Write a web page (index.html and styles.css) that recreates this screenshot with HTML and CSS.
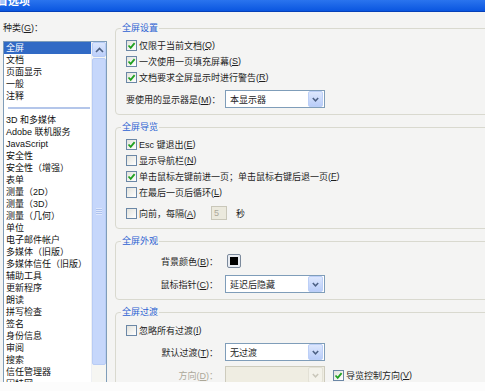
FILE: index.html
```html
<!DOCTYPE html>
<html lang="zh-CN">
<head>
    <meta charset="UTF-8">
    <title>首选项</title>
    <link rel="stylesheet" href="styles.css">
</head>
<body>
<div class="dialog">
    <div class="titlebar"><span class="title-text">首选项</span></div>
    <div class="content">
        <div class="side">
            <div class="side-label">种类(<u>G</u>)：</div>
            <div class="listbox">
                <ul class="items">
                    <li class="selected">全屏</li>
                    <li>文档</li>
                    <li>页面显示</li>
                    <li>一般</li>
                    <li>注释</li>
                    <li class="sep"><span></span></li>
                    <li>3D 和多媒体</li>
                    <li>Adobe 联机服务</li>
                    <li>JavaScript</li>
                    <li>安全性</li>
                    <li>安全性（增强）</li>
                    <li>表单</li>
                    <li>测量（2D）</li>
                    <li>测量（3D）</li>
                    <li>测量（几何）</li>
                    <li>单位</li>
                    <li>电子邮件帐户</li>
                    <li>多媒体（旧版）</li>
                    <li>多媒体信任（旧版）</li>
                    <li>辅助工具</li>
                    <li>更新程序</li>
                    <li>朗读</li>
                    <li>拼写检查</li>
                    <li>签名</li>
                    <li>身份信息</li>
                    <li>审阅</li>
                    <li>搜索</li>
                    <li>信任管理器</li>
                    <li>因特网</li>
                </ul>
                <div class="scrollbar">
                    <div class="scroll-btn">
                        <svg width="9" height="6" viewBox="0 0 9 6"><polyline points="1,5 4.5,1.5 8,5" fill="none" stroke="#4d6185" stroke-width="1.6"/></svg>
                    </div>
                    <div class="scroll-thumb"><span class="grip"></span></div>
                </div>
            </div>
        </div>

        <div class="main">
            <fieldset class="group">
                <legend>全屏设置</legend>
                <div class="group-body">
                    <div class="check-row"><span class="check on"></span>仅限于当前文档(<u>Q</u>)</div>
                    <div class="check-row"><span class="check on"></span>一次使用一页填充屏幕(<u>S</u>)</div>
                    <div class="check-row"><span class="check on"></span>文档要求全屏显示时进行警告(<u>R</u>)</div>
                    <div class="field-row gap5">
                        <span class="field-label">要使用的显示器是(<u>M</u>)：</span>
                        <div class="select"><span class="select-text">本显示器</span><span class="select-btn"></span></div>
                    </div>
                </div>
            </fieldset>

            <fieldset class="group">
                <legend>全屏导览</legend>
                <div class="group-body">
                    <div class="check-row"><span class="check on"></span>Esc 键退出(<u>E</u>)</div>
                    <div class="check-row"><span class="check"></span>显示导航栏(<u>N</u>)</div>
                    <div class="check-row"><span class="check on"></span>单击鼠标左键前进一页；单击鼠标右键后退一页(<u>F</u>)</div>
                    <div class="check-row"><span class="check"></span>在最后一页后循环(<u>L</u>)</div>
                    <div class="check-row tall gap4">
                        <span class="check"></span><span class="every">向前，每隔(<u>A</u>)</span>
                        <span class="num-input">5</span><span class="unit">秒</span>
                    </div>
                </div>
            </fieldset>

            <fieldset class="group">
                <legend>全屏外观</legend>
                <div class="group-body pad-top">
                    <div class="field-row short">
                        <span class="field-label">背景颜色(<u>B</u>)：</span>
                        <span class="swatch"><span></span></span>
                    </div>
                    <div class="field-row gap6">
                        <span class="field-label">鼠标指针(<u>C</u>)：</span>
                        <div class="select"><span class="select-text">延迟后隐藏</span><span class="select-btn"></span></div>
                    </div>
                </div>
            </fieldset>

            <fieldset class="group">
                <legend>全屏过渡</legend>
                <div class="group-body pad-small">
                    <div class="check-row"><span class="check"></span>忽略所有过渡(<u>I</u>)</div>
                    <div class="field-row gap5">
                        <span class="field-label">默认过渡(<u>T</u>)：</span>
                        <div class="select"><span class="select-text">无过渡</span><span class="select-btn"></span></div>
                    </div>
                    <div class="field-row gap5">
                        <span class="field-label disabled">方向(<u>D</u>)：</span>
                        <div class="select off"><span class="select-text"></span><span class="select-btn"></span></div>
                        <span class="check on nav-check"></span>导览控制方向(<u>V</u>)
                    </div>
                </div>
            </fieldset>
        </div>
    </div>
</div>
</body>
</html>
```

FILE: styles.css
```css
body {
    margin: 0;
    padding: 0;
    background-color: #fcfcfc;
    font-family: "Liberation Sans", "Noto Sans CJK SC", sans-serif;
    font-size: 9px;
    color: #1e1e1e;
}
u {
    text-decoration: underline;
}
.dialog {
    width: 485px;
    height: 382px;
    overflow: hidden;
    background-color: #f4f4f3;
}
.titlebar {
    height: 11px;
    overflow: hidden;
    background: linear-gradient(#2a74ee, #0a56e0);
    border-bottom: 1px solid #0640b8;
}
.title-text {
    display: block;
    margin-top: -7px;
    margin-left: -3px;
    line-height: 16px;
    font-size: 11px;
    font-weight: bold;
    color: #fff;
}
.content {
    display: flex;
}

/* left category list */
.side {
    width: 104px;
    flex-shrink: 0;
    padding: 10px 0 0 3px;
}
.side-label {
    line-height: 12px;
    height: 12px;
}
.listbox {
    margin-top: 7px;
    height: 350px;
    display: flex;
    border: 1px solid #7f9db9;
    background-color: #fff;
}
.items {
    list-style: none;
    margin: 0;
    padding: 0;
    flex: 1;
}
.items li {
    height: 12px;
    line-height: 12px;
    padding-left: 2px;
    white-space: nowrap;
    color: #111;
}
.items li.selected {
    background-color: #316ac5;
    color: #fff;
}
.items li.sep {
    display: flex;
    align-items: center;
    padding: 0 1px 0 4px;
}
.items li.sep span {
    flex: 1;
    height: 2px;
    background-color: #b4c6ea;
}
.scrollbar {
    width: 14px;
    display: flex;
    flex-direction: column;
    background-color: #f6f6f2;
    border-left: 1px solid #eef0f4;
}
.scroll-btn {
    height: 13px;
    display: flex;
    align-items: center;
    justify-content: center;
    background: linear-gradient(#dbe6fd, #bccffa);
    border: 1px solid #b6cbf6;
    border-radius: 2px;
}
.scroll-thumb {
    height: 305px;
    margin-top: 1px;
    display: flex;
    align-items: center;
    justify-content: center;
    background-color: #c6d7fb;
    border: 1px solid #b8ccf5;
    border-radius: 2px;
}
.grip {
    width: 6px;
    height: 7px;
    background: repeating-linear-gradient(#eef3fe 0 1px, #9db4e6 1px 2px);
    opacity: 0.6;
}

/* right settings */
.main {
    width: 390px;
    flex-shrink: 0;
    margin-left: 8px;
    padding-top: 10px;
}
.group {
    margin: 0 0 6px;
    padding: 0 0 6px 5px;
    border: 1px solid #d9d9cf;
    border-radius: 4px;
    min-width: 0;
}
.group legend {
    padding: 0 1px;
    line-height: 12px;
    font-size: 9px;
    color: #2c62d2;
}
.group-body {
    padding: 3px 0 0 5px;
}
.group-body.pad-top {
    padding-top: 6px;
}
.group-body.pad-small {
    padding-top: 4px;
}
.check-row {
    display: flex;
    align-items: center;
    height: 16px;
    white-space: nowrap;
}
.check-row.tall {
    height: 18px;
}
.check {
    width: 11px;
    height: 11px;
    box-sizing: border-box;
    margin-right: 2px;
    border: 1px solid #6b87a6;
    background: linear-gradient(135deg, #e2e2dc, #fff);
    flex-shrink: 0;
}
.check.on {
    background: url("data:image/svg+xml;utf8,<svg xmlns='http://www.w3.org/2000/svg' width='9' height='9'><polyline points='1.5,4.5 3.7,6.8 7.6,2.2' fill='none' stroke='%2321a121' stroke-width='1.8'/></svg>") center no-repeat, linear-gradient(135deg, #e2e2dc, #fff);
}
.gap4 {
    margin-top: 4px;
}
.gap5 {
    margin-top: 5px;
}
.gap6 {
    margin-top: 6px;
}
.every {
    width: 72px;
}
.num-input {
    width: 16px;
    height: 14px;
    box-sizing: border-box;
    padding-left: 2px;
    line-height: 12px;
    border: 1px solid #c9c7b9;
    background-color: #ebe9dd;
    color: #aca899;
}
.unit {
    margin-left: 9px;
}
.field-row {
    display: flex;
    align-items: center;
    height: 18px;
    white-space: nowrap;
}
.field-row.short {
    height: 16px;
}
.field-label {
    width: 92px;
    margin-right: 7px;
    text-align: right;
}
.field-label.disabled {
    color: #aca899;
}
.select {
    width: 100px;
    height: 18px;
    box-sizing: border-box;
    display: flex;
    align-items: center;
    border: 1px solid #7f9db9;
    background-color: #fff;
}
.select-text {
    flex: 1;
    padding-left: 4px;
}
.select-btn {
    width: 13px;
    height: 14px;
    margin-right: 1px;
    border: 1px solid #bccff7;
    border-radius: 2px;
    background: url("data:image/svg+xml;utf8,<svg xmlns='http://www.w3.org/2000/svg' width='7' height='5'><polyline points='0.8,1 3.5,3.8 6.2,1' fill='none' stroke='%234d6185' stroke-width='1.5'/></svg>") center no-repeat, linear-gradient(#dde7fd, #b9cdf9);
}
.select.off {
    border-color: #cdcbbd;
    background-color: #efede2;
}
.select.off .select-btn {
    border-color: #e3e1d6;
    background: url("data:image/svg+xml;utf8,<svg xmlns='http://www.w3.org/2000/svg' width='7' height='5'><polyline points='0.8,1 3.5,3.8 6.2,1' fill='none' stroke='%23c9c7ba' stroke-width='1.5'/></svg>") center no-repeat, #f3f2ea;
}
.nav-check {
    margin-left: 8px;
}
.swatch {
    width: 14px;
    height: 14px;
    box-sizing: border-box;
    margin-left: 2px;
    display: flex;
    align-items: center;
    justify-content: center;
    border: 1px solid #7c8a9c;
    border-radius: 2px;
    background-color: #e8ecf2;
}
.swatch span {
    width: 8px;
    height: 8px;
    background-color: #000;
}
```
